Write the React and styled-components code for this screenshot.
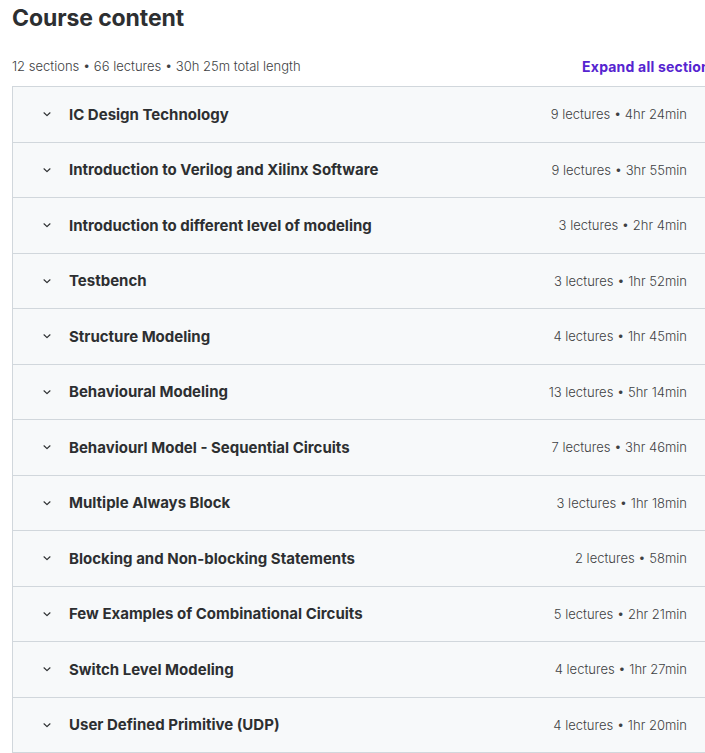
import React from 'react'
import styled, { createGlobalStyle } from 'styled-components'

const GlobalStyle = createGlobalStyle`
    html, body {
        margin: 0;
        padding: 0;
        background: #fff;
        overflow: hidden;
    }
    body {
        font-family: Inter, "Liberation Sans", sans-serif;
        color: #2d2f31;
    }
`;

const sections = [
    { title: 'IC Design Technology', lectures: 9, length: '4hr 24min' },
    { title: 'Introduction to Verilog and Xilinx Software', lectures: 9, length: '3hr 55min' },
    { title: 'Introduction to different level of modeling', lectures: 3, length: '2hr 4min' },
    { title: 'Testbench', lectures: 3, length: '1hr 52min' },
    { title: 'Structure Modeling', lectures: 4, length: '1hr 45min' },
    { title: 'Behavioural Modeling', lectures: 13, length: '5hr 14min' },
    { title: 'Behaviourl Model - Sequential Circuits', lectures: 7, length: '3hr 46min' },
    { title: 'Multiple Always Block', lectures: 3, length: '1hr 18min' },
    { title: 'Blocking and Non-blocking Statements', lectures: 2, length: '58min' },
    { title: 'Few Examples of Combinational Circuits', lectures: 5, length: '2hr 21min' },
    { title: 'Switch Level Modeling', lectures: 4, length: '1hr 27min' },
    { title: 'User Defined Primitive (UDP)', lectures: 4, length: '1hr 20min' },
]

function Chevron() {
    return (
        <svg width="12" height="12" viewBox="0 0 12 12" fill="none">
            <path d="M3 4.8 L6 7.6 L9 4.8" stroke="#2d2f31" strokeWidth="1.2" strokeLinecap="round" strokeLinejoin="round" />
        </svg>
    )
}

function App() {
    return (
        <Page>
            <GlobalStyle />
            <Title>Course content</Title>
            <Summary>
                <span>12 sections • 66 lectures • 30h 25m total length</span>
                <ExpandButton>Expand all sections</ExpandButton>
            </Summary>
            <Sections>
                {sections.map((s) => (
                    <SectionRow key={s.title}>
                        <ChevronBox><Chevron /></ChevronBox>
                        <SectionTitle>{s.title}</SectionTitle>
                        <SectionMeta>{s.lectures} lectures • {s.length}</SectionMeta>
                    </SectionRow>
                ))}
            </Sections>
        </Page>
    )
}

const Page = styled.div`
    width: 706px;
    padding-left: 12px;
`;

const Title = styled.h2`
    margin: 0;
    padding-top: 4px;
    font-size: 23px;
    line-height: 28px;
    font-weight: 700;
    letter-spacing: -0.1px;
    color: #2d2f31;
`;

const Summary = styled.div`
    display: flex;
    justify-content: space-between;
    align-items: center;
    margin-top: 22px;
    height: 24px;
    font-size: 13px;
    font-weight: 300;
    color: #3e4143;
    white-space: nowrap;
`;

const ExpandButton = styled.button`
    border: none;
    background: none;
    padding: 0;
    font-family: inherit;
    font-size: 14px;
    font-weight: 700;
    letter-spacing: 0.2px;
    color: #5624d0;
    cursor: pointer;
`;

const Sections = styled.div`
    margin-top: 8px;
    border: 1px solid #d1d7dc;
    border-bottom: none;
`;

const SectionRow = styled.div`
    display: flex;
    align-items: center;
    height: 54.5px;
    padding: 0 30px 0 28px;
    background: #f7f9fa;
    border-bottom: 1px solid #d1d7dc;
`;

const ChevronBox = styled.span`
    display: flex;
    width: 12px;
    margin-right: 16px;
`;

const SectionTitle = styled.span`
    flex: 1;
    font-size: 15px;
    font-weight: 700;
    color: #2d2f31;
    white-space: nowrap;
`;

const SectionMeta = styled.span`
    font-size: 13px;
    font-weight: 300;
    color: #3e4143;
    white-space: nowrap;
`;

export default App
